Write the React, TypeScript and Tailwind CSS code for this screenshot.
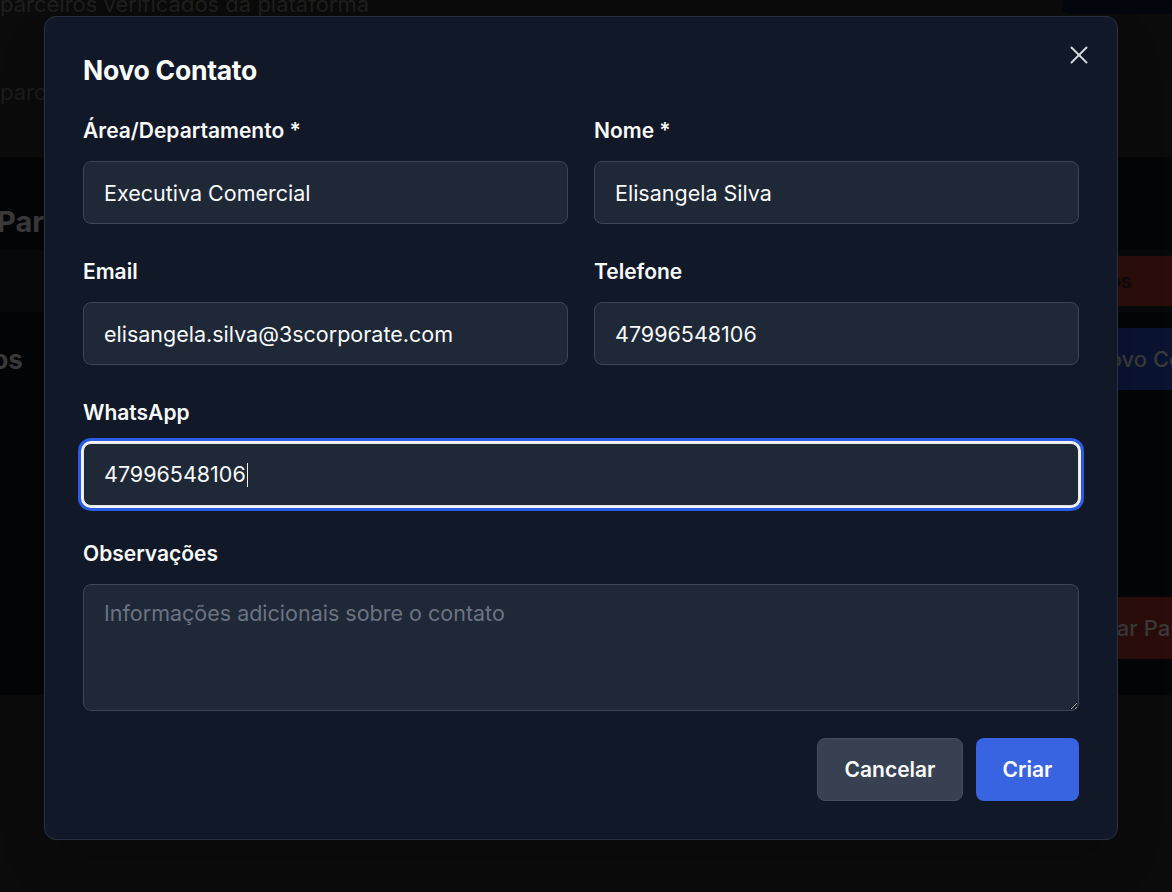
import { X } from 'lucide-react';

const font = { fontFamily: 'Inter, "Noto Sans", sans-serif' };

const labelCls = 'mb-4 h-7 text-[21px] leading-7 font-semibold text-gray-50';

function Field({ label, value }: { label: string; value: string }) {
  return (
    <div className="flex flex-col">
      <label className={labelCls}>{label}</label>
      <input
        readOnly
        value={value}
        className="h-[63px] rounded-lg border border-[#3d4657] bg-[#1f2837] px-5 text-[21.5px] text-gray-50 outline-none"
      />
    </div>
  );
}

// The page that sits behind the dialog, already dimmed by the backdrop.
function BackgroundPage() {
  return (
    <div className="flex min-h-[892px] flex-col overflow-hidden bg-[#0b0b0b] text-[20px]">
      <div className="flex h-[157px] justify-between">
        <div className="flex flex-col">
          <p className="-mt-[10px] text-[22px] leading-7 whitespace-nowrap text-[#1f1f1f]">parceiros verificados da plataforma</p>
          <p className="mt-[58px] text-[22px] leading-8 text-[#1c1c1c]">parceiros</p>
        </div>
        <div className="h-[14px] w-[110px] rounded-bl-lg bg-[#04060e]" />
      </div>
      <div className="flex h-[538px] flex-col bg-[#040507]">
        <div className="flex h-[93px] items-end pb-[12px]">
          <span className="-ml-[3px] text-[29px] font-bold leading-8 text-[#3a3a3a]">Parceiro</span>
        </div>
        <div className="flex h-[62px] items-center justify-end bg-[#08090b]">
          <span className="flex h-[50px] w-[170px] items-center rounded-l-lg bg-[#2a0d0b] pl-[42px] font-semibold whitespace-nowrap text-[#0a0a0a]">
            Contatos
          </span>
        </div>
        <div className="mt-4 flex h-[62px] items-center justify-between">
          <span className="-ml-[93px] text-[26px] font-bold text-[#3a3a3a]">Contatos</span>
          <span className="flex h-full w-[170px] items-center overflow-hidden rounded-l-lg bg-[#0a1330] pl-[90px] text-[22px] font-medium whitespace-nowrap text-[#3a3a3a]">
            Novo Contato
          </span>
        </div>
        <div className="mt-[207px] flex h-[62px] justify-end">
          <span className="flex h-full w-[140px] items-center overflow-hidden rounded-l-lg bg-[#2a0d0b] pl-[30px] text-[22px] font-medium whitespace-nowrap text-[#3a3a3a]">
            Deletar Parceiro
          </span>
        </div>
      </div>
    </div>
  );
}

export default function App() {
  return (
    <div className="relative h-[892px] w-[1172px] overflow-hidden" style={font}>
      <BackgroundPage />
      <div className="absolute top-4 left-[44px] w-[1074px] rounded-xl border border-[#2a3242] bg-[#111827] px-[38px] pt-[37px] pb-[38px] shadow-2xl">
        <button className="absolute top-[23px] right-[23px] text-gray-300" aria-label="Fechar">
          <X size={30} strokeWidth={1.6} />
        </button>
        <h2 className="h-8 text-[26.5px] leading-8 font-bold tracking-[-0.01em] text-white">Novo Contato</h2>
        <div className="mt-[31px] grid grid-cols-2 gap-x-[26px] gap-y-[34px]">
          <Field label="Área/Departamento *" value="Executiva Comercial" />
          <Field label="Nome *" value="Elisangela Silva" />
          <Field label="Email" value="elisangela.silva@3scorporate.com" />
          <Field label="Telefone" value="47996548106" />
          <div className="col-span-2 flex flex-col">
            <label className={labelCls}>WhatsApp</label>
            <div className="flex h-[63px] items-center rounded-lg border border-gray-200 bg-[#1f2837] px-5 text-[21.5px] text-gray-50 ring-3 ring-[#2b5ce6] ring-offset-2 ring-offset-gray-100">
              <span>47996548106</span>
              <span className="ml-px h-6 w-px bg-gray-100" />
            </div>
          </div>
          <div className="col-span-2 flex flex-col">
            <label className={labelCls}>Observações</label>
            <textarea
              rows={3}
              placeholder="Informações adicionais sobre o contato"
              className="h-[127px] rounded-lg border border-[#3d4657] bg-[#1f2837] px-5 pt-3 text-[21.5px] text-gray-50 outline-none placeholder:text-[#6b7382]"
            />
          </div>
        </div>
        <div className="mt-[27px] flex justify-end gap-[13px]">
          <button className="h-[63px] w-[146px] rounded-lg border border-[#454e5d] bg-[#374151] text-[21px] font-semibold text-gray-50">
            Cancelar
          </button>
          <button className="h-[63px] w-[103px] rounded-lg bg-[#3864e2] text-[21px] font-semibold text-white">
            Criar
          </button>
        </div>
      </div>
    </div>
  );
}
